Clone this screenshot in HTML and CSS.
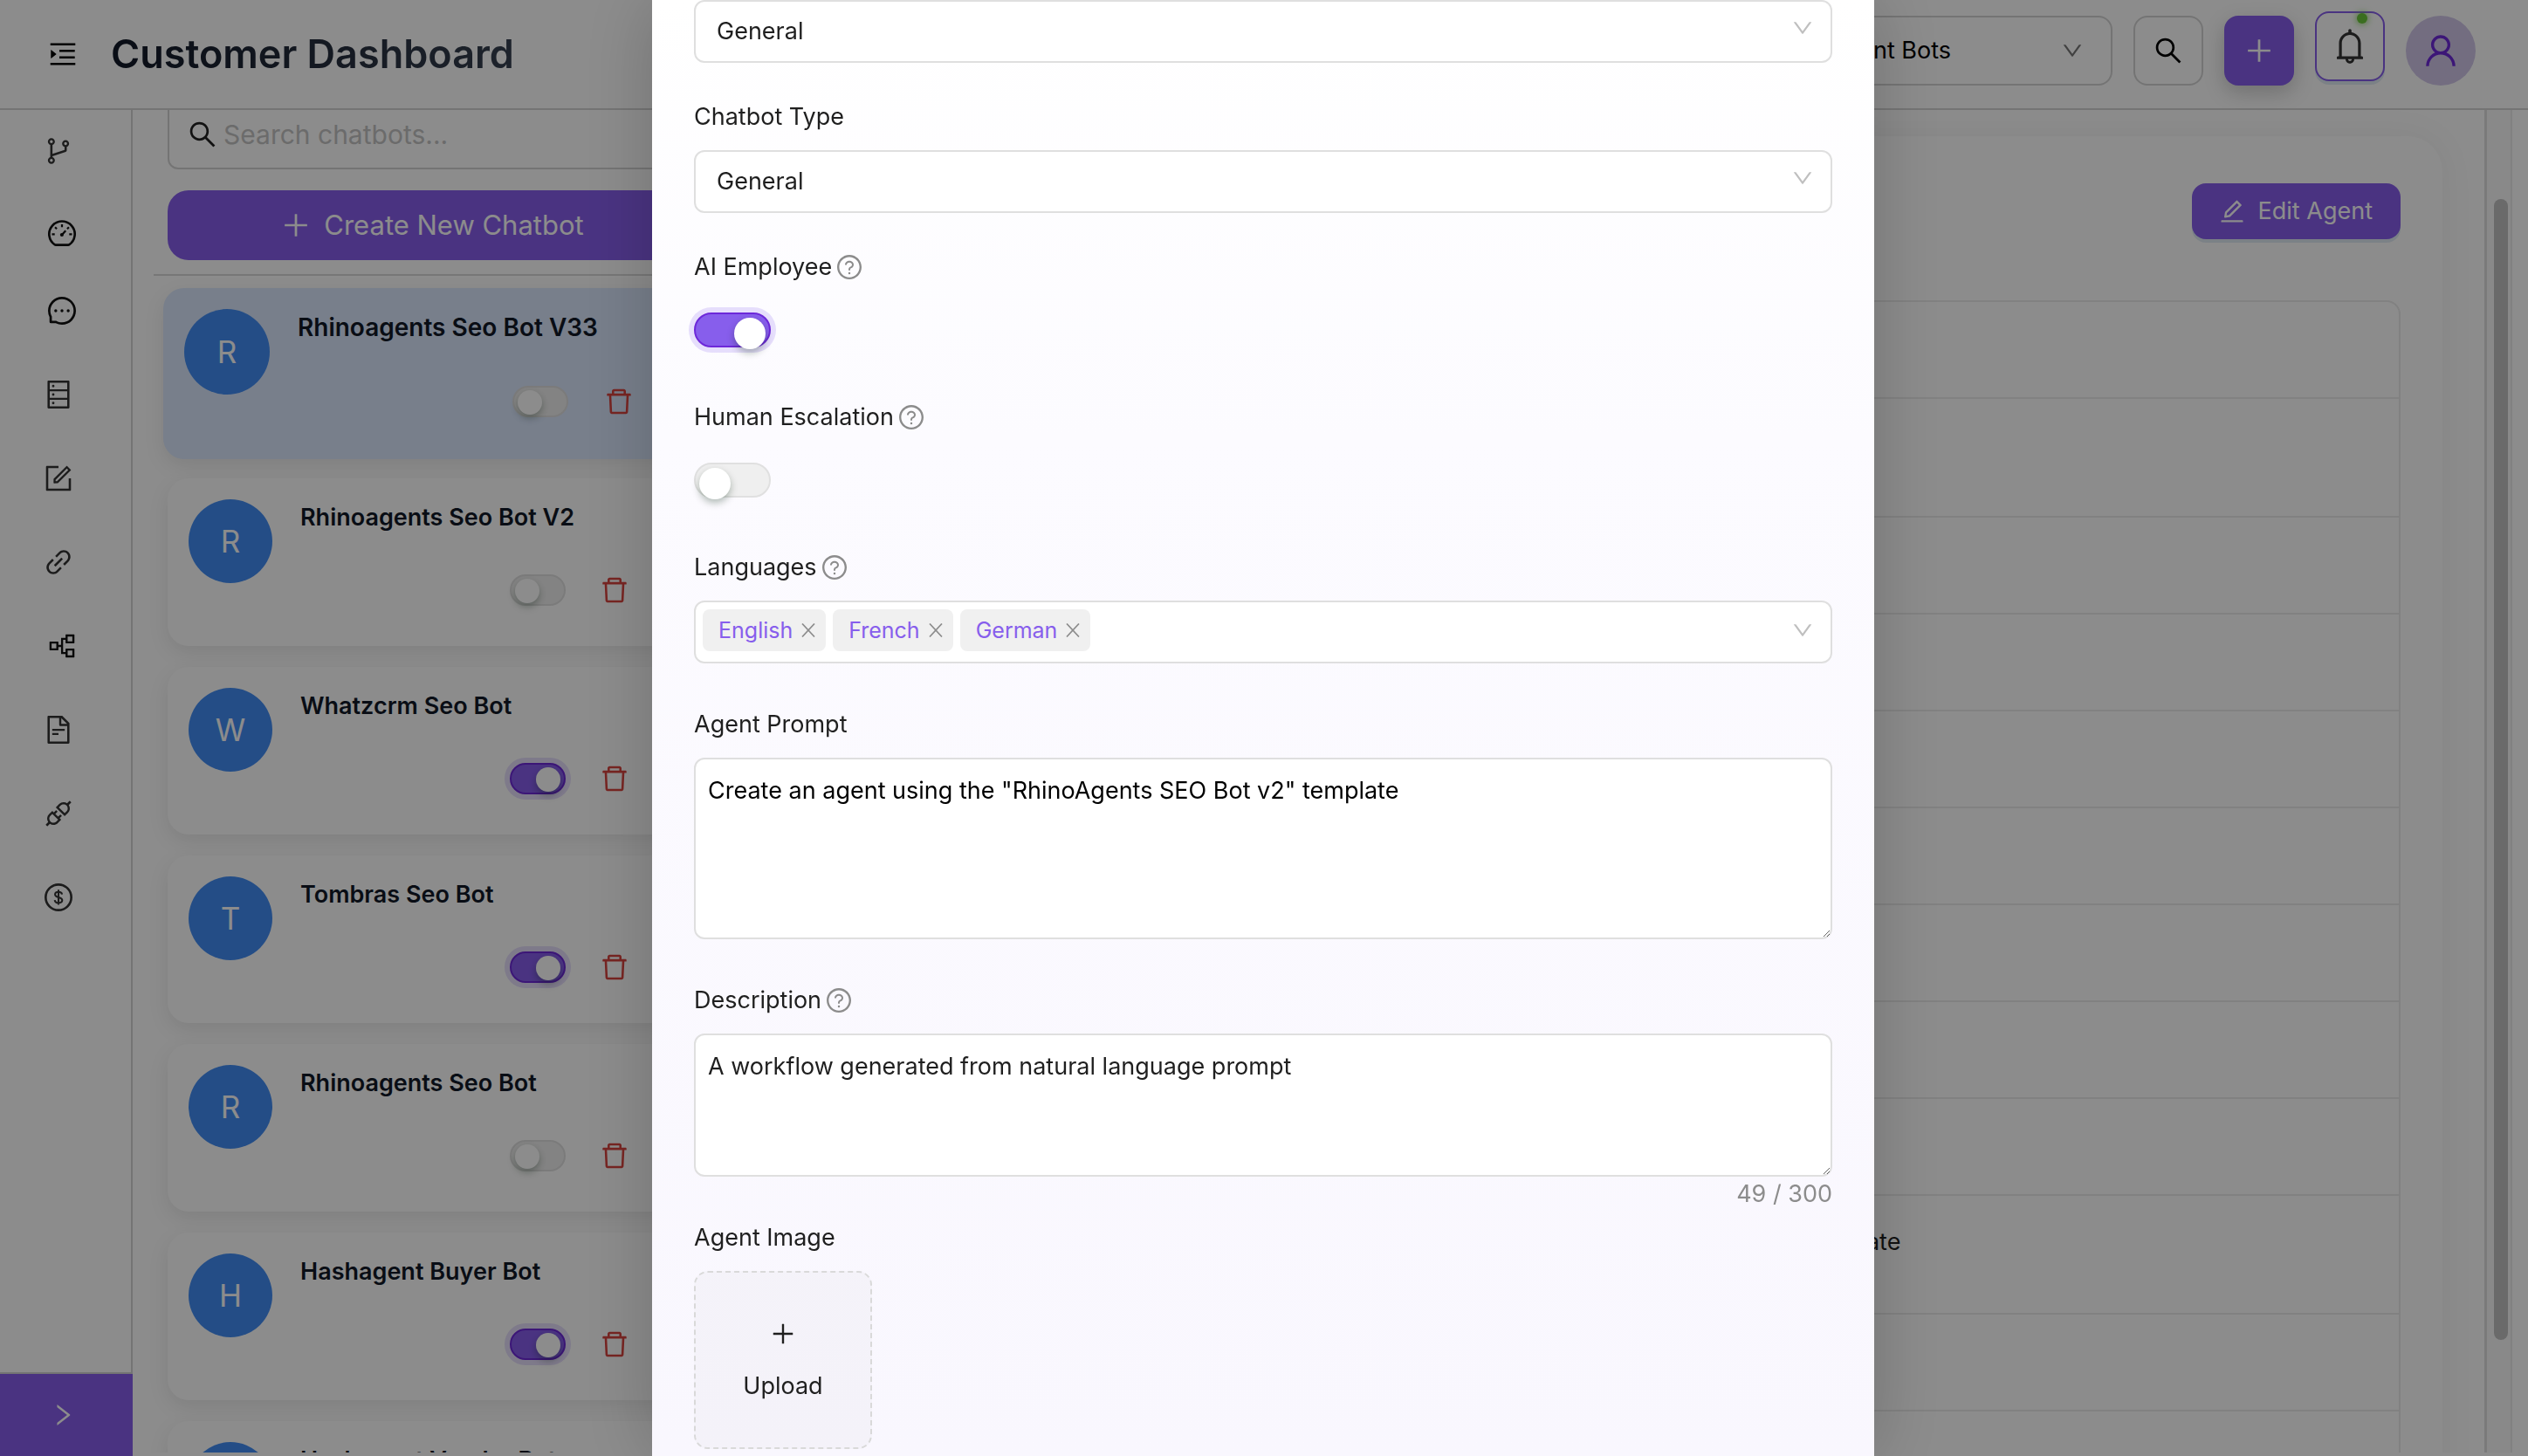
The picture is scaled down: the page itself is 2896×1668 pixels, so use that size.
FILE: index.html
```html
<!DOCTYPE html>
<html lang="en">
<head>
<meta charset="utf-8">
<meta name="viewport" content="width=device-width, initial-scale=1">
<title>Customer Dashboard</title>
<link rel="stylesheet" href="styles.css">
</head>
<body>
<svg class="sprite" aria-hidden="true">
  <symbol id="i-plus" viewBox="64 64 896 896"><path d="M482 152h60q8 0 8 8v704q0 8-8 8h-60q-8 0-8-8V160q0-8 8-8z"/><path d="M160 474h704q8 0 8 8v60q0 8-8 8H160q-8 0-8-8v-60q0-8 8-8z"/></symbol>
  <symbol id="i-search" viewBox="64 64 896 896"><path d="M909.6 854.5L649.9 594.8C690.2 542.7 712 479 712 412c0-80.2-31.3-155.4-87.9-212.1-56.6-56.7-132-87.9-212.1-87.9s-155.5 31.3-212.1 87.9C143.2 256.5 112 331.8 112 412c0 80.1 31.3 155.5 87.9 212.1C256.5 680.8 331.8 712 412 712c67 0 130.6-21.8 182.7-62l259.7 259.6a8.2 8.2 0 0011.6 0l43.6-43.5a8.2 8.2 0 000-11.6zM570.4 570.4C528 612.7 471.8 636 412 636s-116-23.3-158.4-65.6C211.3 528 188 471.8 188 412s23.3-116.1 65.6-158.4C296 211.3 352.2 188 412 188s116.1 23.2 158.4 65.6S636 352.2 636 412s-23.3 116.1-65.6 158.4z"/></symbol>
  <symbol id="i-down" viewBox="64 64 896 896"><path d="M884 256h-75c-5.100 0-9.900 2.500-12.900 6.600L512 654.200 227.900 262.600c-3-4.100-7.800-6.600-12.900-6.600h-75c-6.500 0-10.300 7.400-6.500 12.700l352.600 486.100c12.800 17.600 39 17.600 51.700 0l352.600-486.100c3.900-5.300.1-12.700-6.400-12.700z"/></symbol>
  <symbol id="i-right" viewBox="64 64 896 896"><path d="M765.700 486.800L314.900 134.700A7.970 7.970 0 00302 141v77.300c0 4.900 2.300 9.600 6.100 12.600l360 281.100-360 281.100c-3.900 3-6.100 7.700-6.100 12.600V883c0 6.700 7.700 10.400 12.900 6.300l450.800-352.100a31.960 31.960 0 000-50.400z"/></symbol>
  <symbol id="i-delete" viewBox="64 64 896 896"><path d="M360 184h304v72h72v-80c0-35.300-28.700-64-64-64H352c-35.300 0-64 28.700-64 64v80h72v-72zm504 72H160c-17.700 0-32 14.300-32 32v32c0 4.400 3.600 8 8 8h60.400l24.700 523c1.600 34.100 29.800 61 63.900 61h454c34.200 0 62.300-26.800 63.900-61l24.700-523H888c4.400 0 8-3.600 8-8v-32c0-17.700-14.300-32-32-32zM731.300 840H292.700l-24.200-512h487l-24.200 512z"/></symbol>
  <symbol id="i-user" viewBox="64 64 896 896"><path d="M858.500 763.600a374 374 0 00-80.600-119.500 375.630 375.630 0 00-119.500-80.600c-.4-.2-.8-.3-1.200-.5C719.500 518 760 444.700 760 362c0-137-111-248-248-248S264 225 264 362c0 82.700 40.500 156 102.800 201.100-.4.2-.8.3-1.200.5-44.800 18.900-85 46-119.500 80.600a375.630 375.630 0 00-80.600 119.500A371.700 371.700 0 00136 901.800a8 8 0 008 8.200h60c4.400 0 7.900-3.500 8-7.800 2-77.200 33-149.500 87.800-204.300 56.700-56.700 132-87.900 212.200-87.900s155.500 31.200 212.200 87.900C779 752.700 810 825 812 902.200c.1 4.400 3.600 7.800 8 7.800h60a8 8 0 008-8.200c-1-47.800-10.900-94.300-29.500-138.200zM512 534c-45.900 0-89.100-17.900-121.600-50.400S340 407.900 340 362c0-45.900 17.900-89.100 50.400-121.600S466.100 190 512 190s89.100 17.900 121.600 50.400S684 316.100 684 362c0 45.900-17.900 89.100-50.400 121.600S557.900 534 512 534z"/></symbol>
  <symbol id="i-bell" viewBox="64 64 896 896"><path d="M816 768h-24V428c0-141.100-104.300-257.700-240-277.100V112c0-22.100-17.900-40-40-40s-40 17.900-40 40v38.900c-135.700 19.400-240 136-240 277.100v340h-24c-17.700 0-32 14.300-32 32v32c0 4.400 3.600 8 8 8h216c0 61.800 50.200 112 112 112s112-50.200 112-112h216c4.400 0 8-3.600 8-8v-32c0-17.700-14.300-32-32-32zM512 888c-26.500 0-48-21.500-48-48h96c0 26.500-21.500 48-48 48zM304 768V428c0-55.600 21.600-107.800 60.900-147.100S456.400 220 512 220c55.600 0 107.800 21.600 147.100 60.900S720 372.400 720 428v340H304z"/></symbol>
  <symbol id="i-edit" viewBox="64 64 896 896"><path d="M257.700 752c2 0 4-.2 6-.5L431.900 722c2-.4 3.900-1.300 5.300-2.800l423.900-423.900a9.960 9.960 0 000-14.100L694.900 114.900c-1.900-1.900-4.400-2.900-7.100-2.900s-5.200 1-7.100 2.900L256.800 538.800c-1.500 1.500-2.400 3.300-2.800 5.300l-29.500 168.200a33.500 33.500 0 009.400 29.800c6.600 6.400 14.900 9.900 23.800 9.900zm67.400-174.400L687.800 215l73.300 73.300-362.700 362.600-88.900 15.700 15.600-89zM880 836H144c-17.700 0-32 14.300-32 32v36c0 4.400 3.600 8 8 8h784c4.400 0 8-3.600 8-8v-36c0-17.700-14.300-32-32-32z"/></symbol>
  <symbol id="i-close" viewBox="0 0 16 16"><path d="M1 0.500L15 15.500M15 0.500L1 15.500" fill="none" stroke="currentColor" stroke-width="1.700"/></symbol>
  <symbol id="i-help" viewBox="64 64 896 896"><path d="M512 64C264.600 64 64 264.600 64 512s200.600 448 448 448 448-200.600 448-448S759.400 64 512 64zm0 820c-205.400 0-372-166.600-372-372s166.600-372 372-372 372 166.600 372 372-166.600 372-372 372z"/><path d="M623.600 316.700C593.600 290.400 554 276 512 276s-81.600 14.500-111.600 40.700C369.200 344 352 380.700 352 420v7.600c0 4.400 3.600 8 8 8h48c4.400 0 8-3.600 8-8V420c0-44.100 43.100-80 96-80s96 35.900 96 80c0 31.100-22 59.600-56.100 72.700-21.200 8.100-39.200 22.300-52.100 40.900-13.100 19-19.900 41.800-19.900 64.900V620c0 4.400 3.600 8 8 8h48c4.400 0 8-3.600 8-8v-22.700a48.300 48.300 0 0130.900-44.800c59-22.700 97.100-74.700 97.100-132.500.1-39.300-17.100-76-48.300-103.300zM472 732a40 40 0 1080 0 40 40 0 10-80 0z"/></symbol>
  <symbol id="i-menu" viewBox="64 64 896 896"><path d="M408 442h480c4.400 0 8-3.600 8-8v-56c0-4.400-3.600-8-8-8H408c-4.400 0-8 3.600-8 8v56c0 4.400 3.600 8 8 8zm-8 204c0 4.400 3.600 8 8 8h480c4.400 0 8-3.600 8-8v-56c0-4.400-3.600-8-8-8H408c-4.400 0-8 3.600-8 8v56zm504-486H120c-4.400 0-8 3.600-8 8v56c0 4.400 3.600 8 8 8h784c4.400 0 8-3.600 8-8v-56c0-4.400-3.600-8-8-8zm0 632H120c-4.400 0-8 3.600-8 8v56c0 4.400 3.600 8 8 8h784c4.400 0 8-3.600 8-8v-56c0-4.400-3.600-8-8-8zM142.400 642.100L298.700 519a8.840 8.840 0 000-13.900L142.400 381.900c-5.800-4.600-14.400-.5-14.400 6.900v246.300a8.900 8.900 0 0014.400 7z"/></symbol>
  <symbol id="i-branches" viewBox="64 64 896 896"><path d="M740 161c-61.800 0-112 50.200-112 112 0 50.100 33.100 92.600 78.500 106.900v95.900L320 602.400V318.100c44.200-15 76-56.900 76-106.100 0-61.800-50.200-112-112-112s-112 50.200-112 112c0 49.200 31.800 91 76 106.100V706c-44.200 15-76 56.900-76 106.100 0 61.800 50.200 112 112 112s112-50.200 112-112c0-49.200-31.800-91-76-106.100v-27.800l423.500-138.700a50.520 50.520 0 0034.900-48.200V378.200c42.900-15.800 73.600-57 73.600-105.200 0-61.800-50.200-112-112-112zm-504 51a48.010 48.010 0 0196 0 48.010 48.010 0 01-96 0zm96 600a48.010 48.010 0 01-96 0 48.010 48.010 0 0196 0zm408-491a48.010 48.010 0 010-96 48.010 48.010 0 010 96z"/></symbol>
  <symbol id="i-gauge" viewBox="64 64 896 896"><g fill="none" stroke="currentColor" stroke-width="74"><path d="M285 860A411 411 0 1 1 739 860Q728 867 715 867H309Q296 867 285 860z"/><path d="M512 205v90M290 295l55 55M190 520h90M744 520h90M505 545L630 405M734 295l-55 55" stroke-width="62"/></g><circle cx="508" cy="540" r="58"/></symbol>
  <symbol id="i-message" viewBox="64 64 896 896"><path d="M464 512a48 48 0 1096 0 48 48 0 10-96 0zm200 0a48 48 0 1096 0 48 48 0 10-96 0zm-400 0a48 48 0 1096 0 48 48 0 10-96 0zm661.200-173.600c-22.600-53.700-55-101.900-96.300-143.300a444.350 444.350 0 00-143.300-96.300C630.600 75.700 572.200 64 512 64h-2c-60.600.3-119.300 12.300-174.500 35.900a445.350 445.350 0 00-142 96.500c-40.900 41.300-73 89.300-95.200 142.800-23 55.400-34.600 114.300-34.300 174.900A449.400 449.400 0 00112 714v152a46 46 0 0046 46h152.100A449.400 449.400 0 00510 960h2.100c59.900 0 118-11.600 172.700-34.300a444.480 444.480 0 00142.800-95.200c41.300-40.900 73.800-88.700 96.500-142 23.600-55.200 35.600-113.900 35.900-174.500.3-60.900-11.500-120-34.800-175.600zm-151.100 438C704 845.800 611 884 512 884h-1.700c-60.300-.3-120.200-15.300-173.100-43.500l-8.400-4.500H188V695.200l-4.500-8.400C155.300 633.900 140.300 574 140 513.700c-.4-99.700 37.700-193.300 107.600-263.800 69.800-70.500 163.100-109.500 262.800-109.900h1.700c50 0 98.500 9.700 144.200 28.900 44.600 18.700 84.600 45.600 119 80 34.300 34.300 61.300 74.400 80 119 19.400 46.200 29.100 95.200 28.900 145.800-.6 99.600-39.700 192.900-110.100 262.700z"/></symbol>
  <symbol id="i-database" viewBox="64 64 896 896"><path d="M832 64H192c-17.700 0-32 14.300-32 32v832c0 17.700 14.300 32 32 32h640c17.700 0 32-14.300 32-32V96c0-17.700-14.300-32-32-32zm-600 72h560v208H232V136zm560 480H232V408h560v208zm0 272H232V680h560v208zM304 240a40 40 0 1080 0 40 40 0 10-80 0zm0 272a40 40 0 1080 0 40 40 0 10-80 0zm0 272a40 40 0 1080 0 40 40 0 10-80 0z"/></symbol>
  <symbol id="i-form" viewBox="64 64 896 896"><path d="M904 512h-56c-4.400 0-8 3.600-8 8v320H184V184h320c4.400 0 8-3.600 8-8v-56c0-4.400-3.600-8-8-8H144c-17.700 0-32 14.300-32 32v736c0 17.700 14.300 32 32 32h736c17.700 0 32-14.300 32-32V520c0-4.400-3.600-8-8-8z"/><path d="M355.900 534.900L354 653.800c-.1 8.900 7.100 16.200 16 16.200h.4l118-2.900c2-.1 4-.9 5.400-2.300l415.900-415c3.100-3.100 3.100-8.200 0-11.300L785.400 114.300c-1.600-1.600-3.600-2.300-5.700-2.300s-4.100.8-5.700 2.300l-415.800 415a8.300 8.300 0 00-2.300 5.600zm63.500 23.600L779.700 199l45.200 45.100-360.500 359.700-45.700 1.100.7-46.400z"/></symbol>
  <symbol id="i-link" viewBox="64 64 896 896"><path d="M574 665.400a8.030 8.030 0 00-11.300 0L446.500 781.600c-53.800 53.800-144.600 59.500-204 0-59.500-59.500-53.800-150.200 0-204l116.200-116.200c3.100-3.100 3.100-8.200 0-11.300l-39.800-39.800a8.030 8.030 0 00-11.300 0L191.400 526.500c-84.600 84.600-84.600 221.500 0 306s221.500 84.600 306 0l116.200-116.200c3.100-3.100 3.100-8.200 0-11.300L574 665.400zm258.600-474c-84.600-84.600-221.500-84.600-306 0L410.300 307.600a8.030 8.030 0 000 11.300l39.700 39.700c3.100 3.100 8.200 3.100 11.300 0l116.200-116.200c53.800-53.800 144.600-59.500 204 0 59.500 59.500 53.800 150.200 0 204L665.300 562.600a8.030 8.030 0 000 11.300l39.800 39.800c3.100 3.100 8.200 3.100 11.300 0l116.200-116.200c84.500-84.600 84.500-221.500 0-306.100zM610.100 372.300a8.030 8.030 0 00-11.300 0L372.300 598.700a8.030 8.030 0 000 11.300l39.600 39.600c3.100 3.100 8.200 3.100 11.300 0l226.400-226.400c3.100-3.100 3.100-8.200 0-11.300l-39.500-39.600z"/></symbol>
  <symbol id="i-tree" viewBox="64 64 896 896"><path d="M640.600 429.800h257.100c7.900 0 14.300-6.400 14.300-14.300V158.300c0-7.900-6.400-14.300-14.300-14.300H640.600c-7.900 0-14.300 6.400-14.300 14.300v92.900H490.600c-3.900 0-7.100 3.200-7.100 7.100v221.500h-85.700v-96.500c0-7.900-6.400-14.300-14.300-14.300H126.300c-7.900 0-14.300 6.400-14.300 14.300v257.200c0 7.900 6.400 14.300 14.300 14.300h257.100c7.900 0 14.300-6.400 14.300-14.300V544h85.700v221.500c0 3.900 3.200 7.100 7.100 7.100h135.700v92.900c0 7.900 6.400 14.300 14.300 14.300h257.100c7.900 0 14.300-6.400 14.300-14.300v-257c0-7.900-6.400-14.300-14.300-14.300h-257c-7.900 0-14.300 6.400-14.300 14.300v100h-78.600v-393h78.600v100c0 7.900 6.400 14.300 14.300 14.300zm53.500-217.900h150V362h-150V211.900zM329.900 587h-150V437h150v150zm364.200 75.100h150v150.100h-150V662.100z"/></symbol>
  <symbol id="i-file" viewBox="64 64 896 896"><path d="M854.600 288.600L639.400 73.400c-6-6-14.100-9.400-22.600-9.400H192c-17.700 0-32 14.300-32 32v832c0 17.700 14.300 32 32 32h640c17.700 0 32-14.300 32-32V311.300c0-8.500-3.400-16.700-9.400-22.700zM790.200 326H602V137.800L790.200 326zm1.800 562H232V136h302v216a42 42 0 0042 42h216v494zM504 618H320c-4.400 0-8 3.600-8 8v48c0 4.400 3.600 8 8 8h184c4.400 0 8-3.600 8-8v-48c0-4.400-3.600-8-8-8zM312 490v48c0 4.400 3.600 8 8 8h384c4.400 0 8-3.600 8-8v-48c0-4.400-3.600-8-8-8H320c-4.400 0-8 3.600-8 8z"/></symbol>
  <symbol id="i-api" viewBox="64 64 896 896"><path d="M917.700 148.800l-42.400-42.400c-1.600-1.600-3.600-2.300-5.700-2.300s-4.100.8-5.700 2.300l-76.100 76.100a199.270 199.270 0 00-112.100-34.300c-51.200 0-102.400 19.500-141.500 58.600L432.300 308.700a8.030 8.030 0 000 11.300L704 591.700c1.600 1.600 3.600 2.300 5.700 2.300 2 0 4.100-.8 5.700-2.300l101.900-101.900c68.900-69 77-175.700 24.300-253.500l76.100-76.100c3.100-3.200 3.100-8.300 0-11.400zM769.100 441.700l-59.400 59.400-186.800-186.800 59.400-59.400c24.900-24.900 58.100-38.700 93.400-38.700 35.300 0 68.400 13.700 93.400 38.700 24.900 24.900 38.700 58.100 38.700 93.400 0 35.300-13.800 68.400-38.700 93.400zm-190.200 105a8.030 8.030 0 00-11.300 0L501 613.300 410.700 523l66.700-66.700c3.100-3.100 3.100-8.200 0-11.300L441 408.600a8.030 8.030 0 00-11.300 0L363 475.300l-43-43a7.850 7.850 0 00-5.700-2.300c-2 0-4.100.8-5.700 2.300L206.800 534.200c-68.900 69-77 175.700-24.300 253.500l-76.100 76.100a8.030 8.030 0 000 11.300l42.400 42.400c1.600 1.600 3.600 2.300 5.700 2.300s4.100-.8 5.700-2.300l76.100-76.100c33.700 22.900 72.900 34.300 112.100 34.300 51.200 0 102.400-19.500 141.500-58.600l101.900-101.900c3.100-3.100 3.100-8.200 0-11.300l-43-43 66.700-66.700c3.100-3.100 3.100-8.200 0-11.300l-36.600-36.200zM441.700 769.100a131.320 131.320 0 01-93.400 38.700c-35.300 0-68.400-13.700-93.400-38.700a131.320 131.320 0 01-38.700-93.400c0-35.300 13.700-68.400 38.700-93.400l59.400-59.400 186.800 186.800-59.400 59.400z"/></symbol>
  <symbol id="i-dollar" viewBox="64 64 896 896"><g fill="none" stroke="currentColor" stroke-width="74"><circle cx="512" cy="512" r="411"/><path d="M625 415C618 355 570 335 512 335S402 362 402 420C402 535 632 485 632 605C632 665 575 690 512 690S398 665 392 600M512 270V752" stroke-width="58"/></g></symbol>
</svg>

<div class="app">
  <header class="topbar">
    <button class="icon-btn topbar__menu" aria-label="Expand menu"><svg class="icon icon--md"><use href="#i-menu"/></svg></button>
    <h1 class="topbar__title">Customer Dashboard</h1>
    <div class="topbar__tools">
      <div class="picker picker--top">
        <select class="picker__select" aria-label="Bot group"><option>Agent Bots</option></select>
        <svg class="icon picker__arrow"><use href="#i-down"/></svg>
      </div>
      <button class="tool" aria-label="Search"><svg class="icon icon--md"><use href="#i-search"/></svg></button>
      <button class="tool tool--primary" aria-label="Add"><svg class="icon icon--md"><use href="#i-plus"/></svg></button>
      <button class="tool tool--bell" aria-label="Notifications"><svg class="icon icon--lg"><use href="#i-bell"/></svg><span class="tool__dot"></span></button>
      <button class="tool tool--avatar" aria-label="Account"><svg class="icon icon--lg"><use href="#i-user"/></svg></button>
    </div>
  </header>

  <div class="shell">
    <aside class="rail">
      <nav class="rail__nav">
        <a class="rail__link rail__link--first" href="#workflows" aria-label="Workflows"><svg class="icon icon--md"><use href="#i-branches"/></svg></a>
        <a class="rail__link rail__link--short rail__link--wide" href="#dashboard" aria-label="Dashboard"><svg class="icon icon--md"><use href="#i-gauge"/></svg></a>
        <a class="rail__link rail__link--wide" href="#chats" aria-label="Chats"><svg class="icon icon--md"><use href="#i-message"/></svg></a>
        <a class="rail__link" href="#data" aria-label="Data"><svg class="icon icon--md"><use href="#i-database"/></svg></a>
        <a class="rail__link" href="#forms" aria-label="Forms"><svg class="icon icon--md"><use href="#i-form"/></svg></a>
        <a class="rail__link" href="#links" aria-label="Links"><svg class="icon icon--md"><use href="#i-link"/></svg></a>
        <a class="rail__link rail__link--wide" href="#structure" aria-label="Structure"><svg class="icon icon--md"><use href="#i-tree"/></svg></a>
        <a class="rail__link" href="#documents" aria-label="Documents"><svg class="icon icon--md"><use href="#i-file"/></svg></a>
        <a class="rail__link" href="#integrations" aria-label="Integrations"><svg class="icon icon--md"><use href="#i-api"/></svg></a>
        <a class="rail__link" href="#billing" aria-label="Billing"><svg class="icon icon--md"><use href="#i-dollar"/></svg></a>
      </nav>
      <button class="rail__toggle" aria-label="Expand sidebar"><svg class="icon icon--sm"><use href="#i-right"/></svg></button>
    </aside>

    <section class="bots">
      <div class="bots__head">
        <label class="search">
          <svg class="icon icon--md"><use href="#i-search"/></svg>
          <input class="search__input" type="search" placeholder="Search chatbots..." aria-label="Search chatbots">
        </label>
        <button class="btn btn--create"><svg class="icon icon--md"><use href="#i-plus"/></svg>Create New Chatbot</button>
      </div>
      <ul class="bots__list">
        <li class="bot bot--active"><span class="bot__avatar">R</span><div class="bot__body"><h2 class="bot__name">Rhinoagents Seo Bot V33</h2><div class="bot__actions"><input class="switch switch--sm" type="checkbox" aria-label="Enable Rhinoagents Seo Bot V33"><button class="icon-btn bot__delete" aria-label="Delete"><svg class="icon icon--md"><use href="#i-delete"/></svg></button></div></div></li>
        <li class="bot"><span class="bot__avatar">R</span><div class="bot__body"><h2 class="bot__name">Rhinoagents Seo Bot V2</h2><div class="bot__actions"><input class="switch switch--sm" type="checkbox" aria-label="Enable Rhinoagents Seo Bot V2"><button class="icon-btn bot__delete" aria-label="Delete"><svg class="icon icon--md"><use href="#i-delete"/></svg></button></div></div></li>
        <li class="bot"><span class="bot__avatar">W</span><div class="bot__body"><h2 class="bot__name">Whatzcrm Seo Bot</h2><div class="bot__actions"><input class="switch switch--sm" type="checkbox" checked aria-label="Enable Whatzcrm Seo Bot"><button class="icon-btn bot__delete" aria-label="Delete"><svg class="icon icon--md"><use href="#i-delete"/></svg></button></div></div></li>
        <li class="bot"><span class="bot__avatar">T</span><div class="bot__body"><h2 class="bot__name">Tombras Seo Bot</h2><div class="bot__actions"><input class="switch switch--sm" type="checkbox" checked aria-label="Enable Tombras Seo Bot"><button class="icon-btn bot__delete" aria-label="Delete"><svg class="icon icon--md"><use href="#i-delete"/></svg></button></div></div></li>
        <li class="bot"><span class="bot__avatar">R</span><div class="bot__body"><h2 class="bot__name">Rhinoagents Seo Bot</h2><div class="bot__actions"><input class="switch switch--sm" type="checkbox" aria-label="Enable Rhinoagents Seo Bot"><button class="icon-btn bot__delete" aria-label="Delete"><svg class="icon icon--md"><use href="#i-delete"/></svg></button></div></div></li>
        <li class="bot"><span class="bot__avatar">H</span><div class="bot__body"><h2 class="bot__name">Hashagent Buyer Bot</h2><div class="bot__actions"><input class="switch switch--sm" type="checkbox" checked aria-label="Enable Hashagent Buyer Bot"><button class="icon-btn bot__delete" aria-label="Delete"><svg class="icon icon--md"><use href="#i-delete"/></svg></button></div></div></li>
        <li class="bot"><span class="bot__avatar"></span><div class="bot__body"><h2 class="bot__name">Hashagent Vendor Bot</h2></div></li>
      </ul>
    </section>

    <main class="detail">
      <article class="detail__card">
        <div class="detail__head"><button class="btn btn--edit"><svg class="icon icon--sm"><use href="#i-edit"/></svg>Edit Agent</button></div>
        <table class="facts">
          <tbody>
            <tr><th scope="row"></th><td></td></tr>
            <tr class="facts__tall"><th scope="row"></th><td></td></tr>
            <tr><th scope="row"></th><td></td></tr>
            <tr><th scope="row"></th><td></td></tr>
            <tr><th scope="row"></th><td></td></tr>
            <tr><th scope="row"></th><td></td></tr>
            <tr><th scope="row"></th><td></td></tr>
            <tr><th scope="row"></th><td></td></tr>
            <tr><th scope="row"></th><td></td></tr>
            <tr class="facts__tall"><th scope="row"></th><td>Create an agent using the "RhinoAgents SEO Bot v2" template</td></tr>
            <tr><th scope="row"></th><td></td></tr>
            <tr><th scope="row"></th><td></td></tr>
          </tbody>
        </table>
      </article>
    </main>
    <div class="scrollbar"><div class="scrollbar__thumb"></div></div>
  </div>
</div>

<div class="overlay">
  <form class="modal" role="dialog" aria-modal="true" aria-label="Edit Agent">
    <div class="field">
      <div class="picker">
        <select class="picker__select" aria-label="Category"><option>General</option></select>
        <svg class="icon picker__arrow"><use href="#i-down"/></svg>
      </div>
    </div>
    <div class="field">
      <label class="field__label" for="type">Chatbot Type</label>
      <div class="picker">
        <select class="picker__select" id="type"><option>General</option></select>
        <svg class="icon picker__arrow"><use href="#i-down"/></svg>
      </div>
    </div>
    <div class="field">
      <label class="field__label" for="employee">AI Employee <svg class="icon icon--help"><use href="#i-help"/></svg></label>
      <div class="field__switch"><input class="switch" type="checkbox" id="employee" checked></div>
    </div>
    <div class="field">
      <label class="field__label" for="escalation">Human Escalation <svg class="icon icon--help"><use href="#i-help"/></svg></label>
      <div class="field__switch"><input class="switch" type="checkbox" id="escalation"></div>
    </div>
    <div class="field field--loose">
      <label class="field__label" for="languages">Languages <svg class="icon icon--help"><use href="#i-help"/></svg></label>
      <div class="tags">
        <span class="tag">English<button class="icon-btn tag__close" type="button" aria-label="Remove English"><svg class="icon icon--xs"><use href="#i-close"/></svg></button></span>
        <span class="tag">French<button class="icon-btn tag__close" type="button" aria-label="Remove French"><svg class="icon icon--xs"><use href="#i-close"/></svg></button></span>
        <span class="tag">German<button class="icon-btn tag__close" type="button" aria-label="Remove German"><svg class="icon icon--xs"><use href="#i-close"/></svg></button></span>
        <input class="tags__input" id="languages" type="text">
        <svg class="icon tags__arrow"><use href="#i-down"/></svg>
      </div>
    </div>
    <div class="field field--loose">
      <label class="field__label" for="prompt">Agent Prompt</label>
      <textarea class="area area--tall" id="prompt">Create an agent using the "RhinoAgents SEO Bot v2" template</textarea>
    </div>
    <div class="field field--counted">
      <label class="field__label" for="description">Description <svg class="icon icon--help"><use href="#i-help"/></svg></label>
      <textarea class="area area--soft" id="description" maxlength="300">A workflow generated from natural language prompt</textarea>
      <output class="field__count" for="description">49 / 300</output>
    </div>
    <div class="field">
      <span class="field__label" id="image-label">Agent Image</span>
      <button class="upload" type="button" aria-describedby="image-label"><svg class="icon icon--help"><use href="#i-plus"/></svg>Upload</button>
    </div>
  </form>
</div>
</body>
</html>
```
FILE: styles.css
```css
:root {
  --purple: #875eec;
  --purple-dark: #6d28d9;
  --halo: #e6defc;
  --ink: #1f1f1f;
  --line: #dfdfdf;
}

* { box-sizing: border-box; }

body {
  margin: 0;
  height: 100vh;
  overflow: hidden;
  background: #fff;
  color: var(--ink);
  font: 27px/44px Inter, "Liberation Sans", sans-serif;
}

button, input, select, textarea { font: inherit; color: inherit; margin: 0; }
button { cursor: pointer; }
h1, h2, ul { margin: 0; padding: 0; }

.sprite { display: none; }
.icon { display: block; flex: none; fill: currentColor; width: 24px; height: 24px; }
.icon--xs { width: 16px; height: 16px; }
.icon--sm { width: 28px; height: 28px; }
.icon--md { width: 32px; height: 32px; }
.icon--lg { width: 40px; height: 40px; }
.icon--help { width: 28px; height: 28px; }
.icon-btn { display: inline-flex; padding: 0; border: 0; background: none; }

/* Shell */
.app { display: flex; flex-direction: column; height: 100vh; }
.shell { display: flex; flex: 1; min-height: 0; }

.topbar {
  display: flex;
  align-items: center;
  flex: none;
  height: 126px;
  padding: 0 60px 0 56px;
  border-bottom: 2px solid #d4d4d4;
}
.topbar__menu { color: #000; }
.topbar__title {
  margin-left: 39px;
  font-size: 45px;
  line-height: 60px;
  font-weight: 600;
  background: linear-gradient(90deg, #111827, #374151);
  background-clip: text;
  color: transparent;
}
.topbar__tools { display: flex; align-items: center; gap: 24px; margin-left: auto; padding-bottom: 8px; }

.tool {
  display: flex;
  align-items: center;
  justify-content: center;
  position: relative;
  width: 80px;
  height: 80px;
  padding: 0;
  border: 2px solid #d4d4d4;
  border-radius: 16px;
  background: #fff;
  color: #000;
}
.tool--primary { border: 0; background: var(--purple); color: #fff; box-shadow: 0 8px 24px rgba(0, 0, 0, .2); }
.tool--bell { border-color: var(--purple); color: #333; box-shadow: 0 4px 0 #e1ecf5; margin-bottom: 10px; }
.tool__dot {
  position: absolute;
  top: 0;
  right: 18px;
  width: 12px;
  height: 12px;
  border-radius: 50%;
  background: #6bc83a;
  box-shadow: 0 0 8px #6bc83a;
}
.tool--avatar { border: 0; border-radius: 50%; background: #d1c7ea; color: var(--purple-dark); }

/* Icon rail */
.rail { display: flex; flex-direction: column; flex: none; width: 152px; }
.rail__nav {
  display: flex;
  flex-direction: column;
  flex: 1;
  border-right: 2px solid #d4d4d4;
  border-bottom: 2px solid #d4d4d4;
}
.rail__link {
  display: flex;
  align-items: center;
  height: 96px;
  padding-left: 51px;
  color: #333;
}
.rail__link--first { height: 94px; }
.rail__link--wide { padding-left: 55px; color: #111; }
.rail__link--short { height: 88px; padding-top: 8px; }
.rail__toggle {
  display: flex;
  align-items: center;
  justify-content: center;
  flex: none;
  height: 94px;
  padding: 0 8px 0 0;
  border: 0;
  background: var(--purple);
  color: #fff;
}

/* Chatbot list */
.bots { flex: none; width: 672px; padding-left: 24px; overflow: hidden; margin-bottom: 4px; }
.bots__head {
  display: flex;
  flex-direction: column;
  gap: 24px;
  margin-top: -12px;
  padding: 0 24px 16px 16px;
  border-bottom: 2px solid #d9d9d9;
}
.search {
  display: flex;
  align-items: center;
  gap: 8px;
  height: 80px;
  padding: 0 22px;
  border: 2px solid #d4d4d4;
  border-radius: 12px;
  color: #222;
}
.search__input { flex: 1; min-width: 0; padding: 0; border: 0; background: none; font-size: 30px; outline: none; }
.search__input::placeholder { color: #c4c4c4; }

.btn {
  display: flex;
  align-items: center;
  justify-content: center;
  border: 0;
  background: var(--purple);
  color: #fff;
}
.btn--create { gap: 16px; height: 80px; border-radius: 24px; font-size: 31px; }
.btn--edit { gap: 16px; height: 64px; padding: 0 32px; border-radius: 16px; box-shadow: 0 4px 0 #e1ecf5; }

.bots__list { display: flex; flex-direction: column; gap: 24px; padding: 16px 24px 0 16px; list-style: none; }
.bot {
  display: flex;
  flex: none;
  gap: 32px;
  height: 192px;
  padding: 24px;
  border-radius: 24px;
  background: #fff;
  box-shadow: 0 8px 24px rgba(0, 0, 0, .09);
}
.bot--active { height: 196px; margin: -2px -5px; background: #dae7fd; }
.bot__avatar {
  display: flex;
  align-items: center;
  justify-content: center;
  flex: none;
  width: 96px;
  height: 96px;
  border-radius: 50%;
  background: #428df4;
  color: #fff;
  font-size: 35px;
}
.bot__body { flex: 1; min-width: 0; }
.bot__name { color: #111827; font-size: 27px; line-height: 42px; font-weight: 600; }
.bot__actions { display: flex; align-items: center; justify-content: flex-end; gap: 40px; height: 36px; margin-top: 44px; padding-right: 56px; }
.bot__delete { color: #d9443f; }
.bot--active .bot__avatar { width: 98px; height: 98px; }
.bot--active .bot__name { font-size: 28px; }
.bot--active .bot__actions { gap: 42px; margin-top: 46px; }

/* Toggle switch */
.switch {
  appearance: none;
  display: flex;
  align-items: center;
  flex: none;
  width: 88px;
  height: 40px;
  padding-left: 4px;
  border: 2px solid #e0e0e0;
  border-radius: 20px;
  background: #efefef;
}
.switch::before {
  content: "";
  width: 36px;
  height: 36px;
  margin-top: 8px;
  border-radius: 50%;
  background: #fff;
  box-shadow: 0 4px 8px rgba(0, 35, 11, .3);
}
.switch:checked {
  justify-content: flex-end;
  padding: 0 4px 0 0;
  border-color: var(--purple-dark);
  background: var(--purple);
  box-shadow: 0 0 0 6px var(--halo);
}
.switch--sm { width: 64px; height: 36px; }
.switch--sm::before { width: 28px; height: 28px; margin-top: 2px; }

/* Agent detail */
.detail { flex: 1; min-width: 0; padding: 30px 48px 0 24px; overflow: hidden; margin-bottom: 4px; }
.detail__card {
  padding: 54px 48px 0;
  border-radius: 40px 40px 0 0;
  box-shadow: 0 0 40px rgba(0, 0, 0, .06);
}
.detail__head { display: flex; justify-content: flex-end; padding-bottom: 70px; }
.facts { width: 100%; border: 2px solid #ebebeb; border-radius: 16px; border-spacing: 0; table-layout: fixed; }
.facts tr { height: 111px; }
.facts .facts__tall { height: 136px; }
.facts th { width: 440px; padding: 0; }
.facts td { padding: 0 48px 28px; vertical-align: middle; }
.facts th, .facts td { border-bottom: 2px solid #ebebeb; }

.scrollbar {
  flex: none;
  width: 32px;
  margin: 0 18px 4px 0;
  padding: 102px 6px 0 8px;
  border-left: 3px solid #dedede;
  border-right: 2px solid #ececec;
  background: #fafafa;
}
.scrollbar__thumb { width: 16px; height: 91%; border-radius: 8px; background: #c1c1c1; }

/* Modal */
.overlay {
  position: fixed;
  inset: 0;
  display: flex;
  justify-content: center;
  padding-right: 2px;
  overflow: hidden;
  background: rgba(0, 0, 0, .45);
}
.modal {
  width: 1400px;
  max-width: 100%;
  min-height: 100%;
  padding: 0 48px;
  background: linear-gradient(#fff, #fcfbff 30%, #f9f7fe);
  box-shadow: 0 0 80px rgba(0, 0, 0, .2);
}
.field { margin-bottom: 40px; }
.field--loose { margin-bottom: 48px; }
.field--counted { margin-bottom: 4px; }
.field__label { display: flex; align-items: center; gap: 6px; height: 44px; margin-bottom: 16px; }
.field__label .icon { color: #8c8c8c; }
.field__switch { display: flex; height: 72px; padding-top: 14px; }
.field__count { display: block; height: 44px; line-height: 40px; text-align: right; color: #8c8c8c; }

.picker { display: grid; align-items: center; height: 72px; }
.picker__select {
  grid-area: 1 / 1;
  appearance: none;
  width: 100%;
  height: 100%;
  padding: 0 64px 0 24px;
  border: 2px solid var(--line);
  border-radius: 12px;
  background: #fff;
}
.picker__arrow { grid-area: 1 / 1; justify-self: end; margin: 0 22px 8px 0; color: #bfbfbf; pointer-events: none; }
.picker--top { width: 420px; height: 80px; }
.picker--top .picker__select { padding-left: 93px; border-color: #d4d4d4; border-radius: 16px; color: #000; }
.picker--top .picker__arrow { margin: 0 34px 0 0; color: #777; }

.tags {
  display: flex;
  align-items: center;
  gap: 8px;
  height: 72px;
  padding: 0 20px 4px 8px;
  border: 2px solid var(--line);
  border-radius: 12px;
  background: #fff;
}
.tag {
  display: inline-flex;
  align-items: center;
  gap: 10px;
  height: 48px;
  padding: 0 12px 0 18px;
  border-radius: 8px;
  background: #f0f0f0;
  color: var(--purple);
  font-size: 25px;
}
.tag__close { color: #8c8c8c; }
.tags__input { flex: 1; min-width: 0; border: 0; background: none; outline: none; }
.tags__arrow { color: #bfbfbf; }

.area {
  display: block;
  width: 100%;
  height: 164px;
  padding: 14px;
  border: 2px solid var(--line);
  border-radius: 12px;
  background: #fff;
  color: #000;
  outline: none;
}
.area--tall { height: 208px; }
.area--soft { color: var(--ink); }

.upload {
  display: flex;
  flex-direction: column;
  align-items: center;
  justify-content: center;
  gap: 24px;
  width: 204px;
  height: 204px;
  padding: 8px 0 0;
  border: 2px dashed #d9d9d9;
  border-radius: 16px;
  background: rgba(0, 0, 0, .02);
}
```
